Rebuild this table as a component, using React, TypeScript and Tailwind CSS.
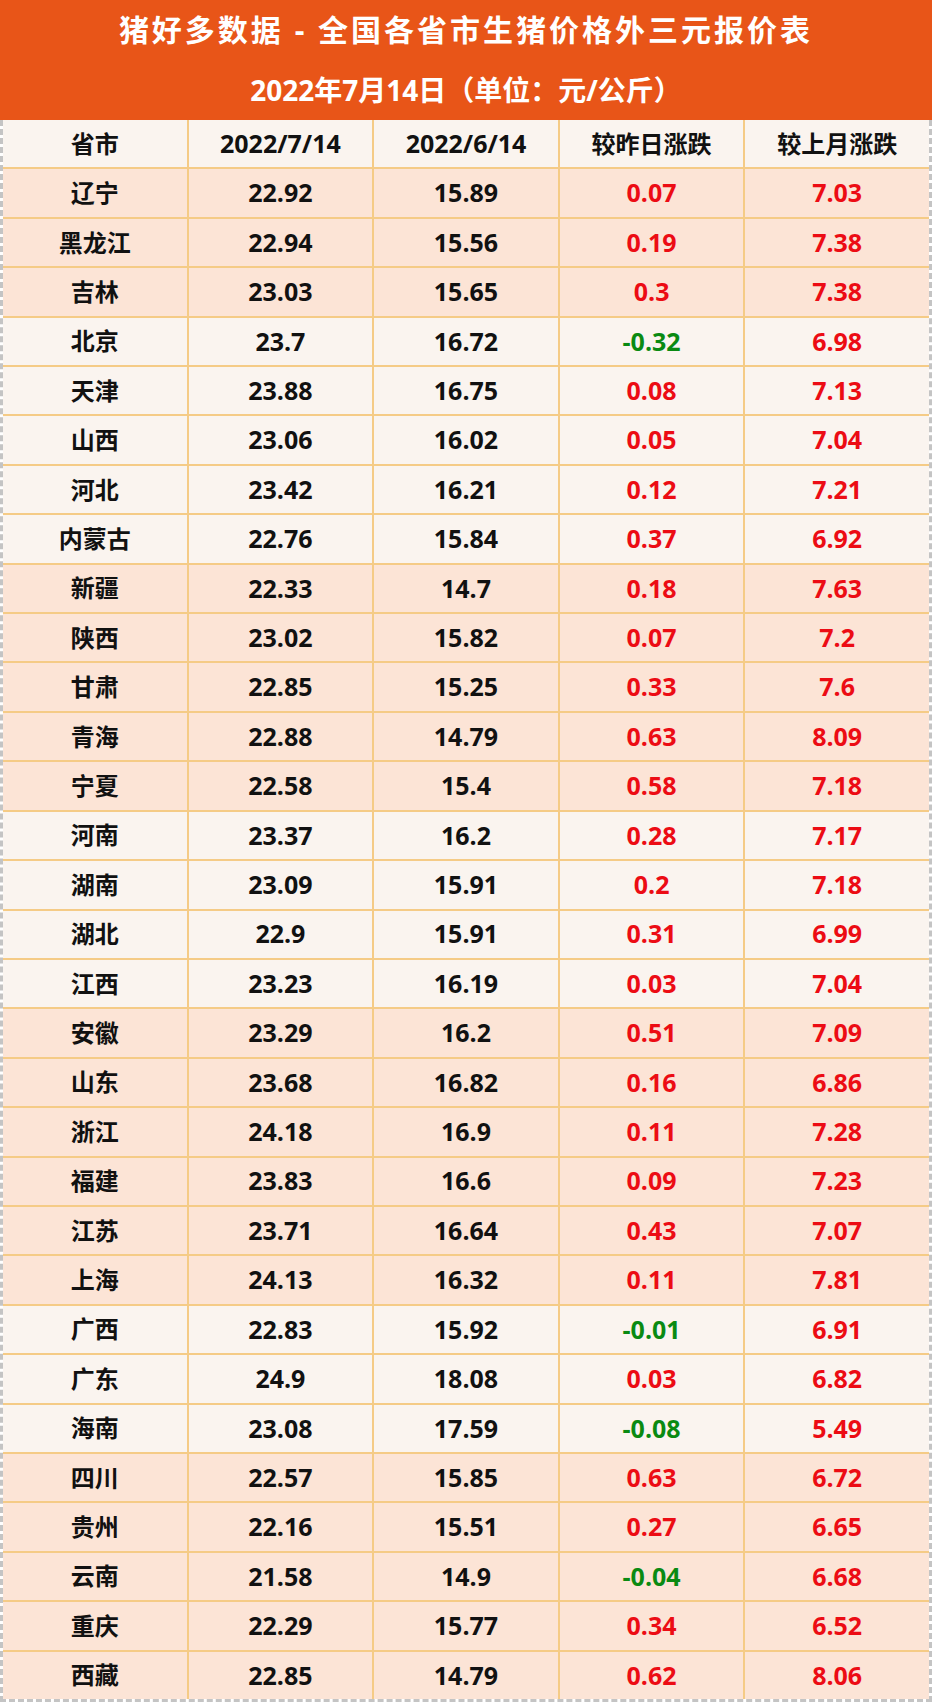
const rows: [string, string, string, string, string, boolean][] = [
  ['辽宁', '22.92', '15.89', '0.07', '7.03', true],
  ['黑龙江', '22.94', '15.56', '0.19', '7.38', true],
  ['吉林', '23.03', '15.65', '0.3', '7.38', true],
  ['北京', '23.7', '16.72', '-0.32', '6.98', false],
  ['天津', '23.88', '16.75', '0.08', '7.13', false],
  ['山西', '23.06', '16.02', '0.05', '7.04', false],
  ['河北', '23.42', '16.21', '0.12', '7.21', false],
  ['内蒙古', '22.76', '15.84', '0.37', '6.92', false],
  ['新疆', '22.33', '14.7', '0.18', '7.63', true],
  ['陕西', '23.02', '15.82', '0.07', '7.2', true],
  ['甘肃', '22.85', '15.25', '0.33', '7.6', true],
  ['青海', '22.88', '14.79', '0.63', '8.09', true],
  ['宁夏', '22.58', '15.4', '0.58', '7.18', true],
  ['河南', '23.37', '16.2', '0.28', '7.17', false],
  ['湖南', '23.09', '15.91', '0.2', '7.18', false],
  ['湖北', '22.9', '15.91', '0.31', '6.99', false],
  ['江西', '23.23', '16.19', '0.03', '7.04', false],
  ['安徽', '23.29', '16.2', '0.51', '7.09', true],
  ['山东', '23.68', '16.82', '0.16', '6.86', true],
  ['浙江', '24.18', '16.9', '0.11', '7.28', true],
  ['福建', '23.83', '16.6', '0.09', '7.23', true],
  ['江苏', '23.71', '16.64', '0.43', '7.07', true],
  ['上海', '24.13', '16.32', '0.11', '7.81', true],
  ['广西', '22.83', '15.92', '-0.01', '6.91', false],
  ['广东', '24.9', '18.08', '0.03', '6.82', false],
  ['海南', '23.08', '17.59', '-0.08', '5.49', false],
  ['四川', '22.57', '15.85', '0.63', '6.72', true],
  ['贵州', '22.16', '15.51', '0.27', '6.65', true],
  ['云南', '21.58', '14.9', '-0.04', '6.68', true],
  ['重庆', '22.29', '15.77', '0.34', '6.52', true],
  ['西藏', '22.85', '14.79', '0.62', '8.06', true],
]

const headers = ['省市', '2022/7/14', '2022/6/14', '较昨日涨跌', '较上月涨跌']

function Cell({ children, className = '', last = false }: { children: React.ReactNode; className?: string; last?: boolean }) {
  return (
    <div
      className={`flex flex-1 items-center justify-center ${last ? '' : 'border-r-2 border-[#f5cb86]'} ${className}`}
    >
      {children}
    </div>
  )
}

// 涨红跌绿
function change(v: string) {
  return v.startsWith('-') ? 'text-[#0a8a12]' : 'text-[#ec0c14]'
}

export default function App() {
  return (
    <div
      className="flex h-[1702px] w-[932px] flex-col bg-white text-[25px] font-bold text-[#111]"
      style={{ fontFamily: '"Open Sans", "Noto Sans CJK SC", sans-serif' }}
    >
      <div className="flex h-[120px] flex-col items-center bg-[#e85518] leading-none text-white">
        <div className="mt-[15px] text-[30px] tracking-[3px]">猪好多数据 - 全国各省市生猪价格外三元报价表</div>
        <div className="mt-[31px] text-[28px]">2022年7月14日（单位：元/公斤）</div>
      </div>
      <div className="flex flex-1 flex-col border-x-[3px] border-b-[3px] border-dashed border-[#c4c4c4]">
        <div className="flex flex-1 border-b-2 border-[#f5cb86] bg-[#faf4ef]">
          {headers.map((h, i) => (
            <Cell key={h} last={i === 4} className={i === 1 || i === 2 ? '' : 'text-[24px]'}>
              {h}
            </Cell>
          ))}
        </div>
        {rows.map(([name, a, b, d, m, peach], idx) => (
          <div
            key={name}
            className={`flex flex-1 ${idx === rows.length - 1 ? '' : 'border-b-2 border-[#f5cb86]'} ${peach ? 'bg-[#fce4d6]' : 'bg-[#faf4ef]'}`}
          >
            <Cell className="text-[24px]">{name}</Cell>
            <Cell>{a}</Cell>
            <Cell>{b}</Cell>
            <Cell className={change(d)}>{d}</Cell>
            <Cell className="text-[#ec0c14]" last>
              {m}
            </Cell>
          </div>
        ))}
      </div>
    </div>
  )
}
